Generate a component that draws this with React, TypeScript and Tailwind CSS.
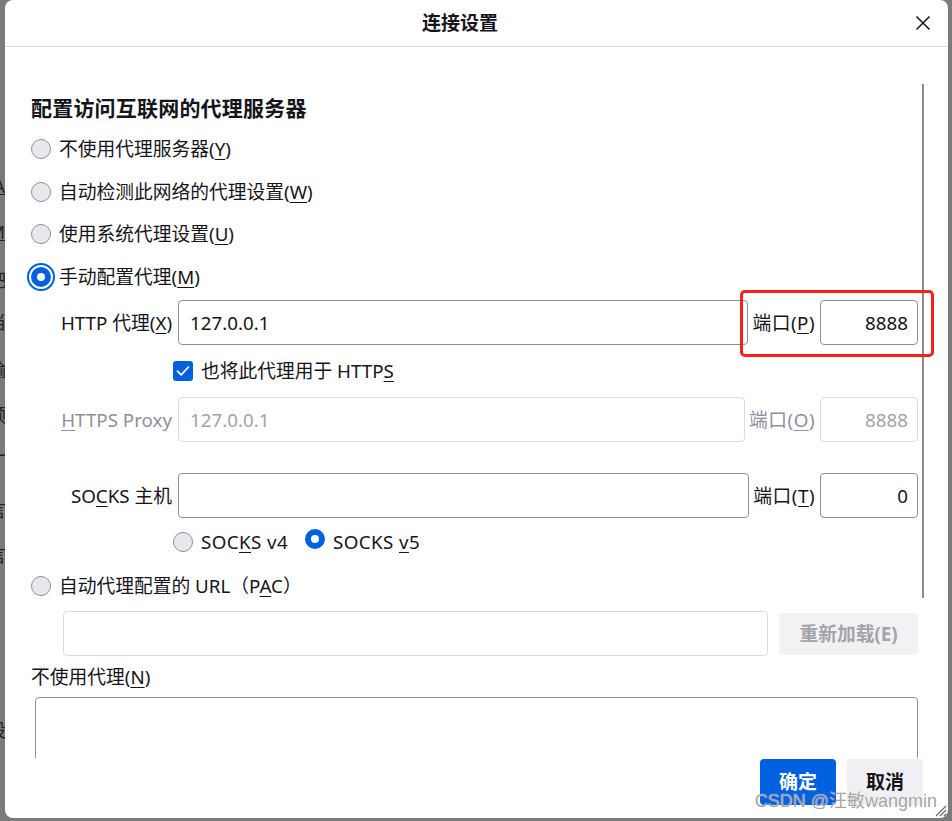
import clsx from 'clsx'

const font = "font-['Noto_Sans','Noto_Sans_CJK_SC',sans-serif]"

function Radio({ checked, focused }: { checked?: boolean; focused?: boolean }) {
  return (
    <span
      className={clsx(
        'box-border inline-block size-[20px] shrink-0 rounded-full',
        checked ? 'border-[6px] border-[#0061e0] bg-white' : 'border border-[#8f8f9d] bg-[#e9e9ed]',
        focused && 'outline-2 outline-offset-2 outline-solid outline-[#0061e0]'
      )}
    />
  )
}

function Checkbox() {
  return (
    <span className="flex size-[20px] shrink-0 items-center justify-center rounded-[3px] bg-[#0061e0]">
      <svg width="14" height="12" viewBox="0 0 14 12" fill="none">
        <path d="M1.5 6.2 5.2 9.8 12.5 2" stroke="#fff" strokeWidth="1.7" strokeLinecap="round" strokeLinejoin="round" />
      </svg>
    </span>
  )
}

function Key({ children }: { children: string }) {
  return <span className="underline decoration-1 underline-offset-[3px]">{children}</span>
}

function RadioRow({ checked, focused, children }: { checked?: boolean; focused?: boolean; children: React.ReactNode }) {
  return (
    <div className="flex h-[42.5px] items-center gap-[8px]">
      <Radio checked={checked} focused={focused} />
      <span>{children}</span>
    </div>
  )
}

type FieldProps = {
  label: React.ReactNode
  value: string
  portLabel: React.ReactNode
  port: string
  disabled?: boolean
  className?: string
}

function Field({ label, value, portLabel, port, disabled, className }: FieldProps) {
  return (
    <div className={clsx('flex h-[45px] items-center', disabled && 'text-[#8f8f9d]', className)}>
      <div className="w-[141px] shrink-0 text-right">{label}</div>
      <div
        className={clsx(
          'ml-[6px] flex h-full flex-1 items-center rounded-[4px] border px-[11px]',
          disabled ? 'border-[#dcdce0] text-[#a3a3a8]' : 'border-[#8f8f9d]'
        )}
      >
        {value}
      </div>
      <div className="ml-[4px] shrink-0 tracking-[0.5px]">{portLabel}</div>
      <div
        className={clsx(
          'ml-[5px] flex h-full w-[98px] shrink-0 items-center justify-end rounded-[4px] border pr-[9px]',
          disabled ? 'border-[#dcdce0] text-[#a3a3a8]' : 'border-[#8f8f9d]'
        )}
      >
        {port}
      </div>
    </div>
  )
}

const behind = [
  { h: 'h-[46px]', t: 'A', u: true },
  { h: 'h-[48px]', t: 'M', u: true },
  { h: 'h-[42px]', t: '吧' },
  { h: 'h-[48px]', t: '当' },
  { h: 'h-[45px]', t: '输' },
  { h: 'h-[47px]', t: '预' },
  { h: 'h-[48px]', t: '厂' },
  { h: 'h-[45px]', t: '言' },
  { h: 'h-[175px]', t: '言' },
  { h: 'h-[40px]', t: '设' },
]

export default function App() {
  return (
    <div className={clsx('flex h-[821px] w-[952px] overflow-hidden bg-[#7b7b7b] text-[18.75px] leading-[26px] text-[#15141a]', font)}>
      {/* page behind the dialog */}
      <div className="w-[5px] shrink-0 overflow-hidden pt-[173px]">
        {behind.map((b, i) => (
          <div key={i} className={clsx('-ml-[12px] w-[17px] text-right text-[18px] leading-[26px] text-[#222]', b.h, b.u && 'underline')}>
            {b.t}
          </div>
        ))}
      </div>

      <div className="relative flex h-[818px] w-[943px] shrink-0 flex-col overflow-hidden rounded-[8px] bg-white">
        <div className="flex h-[47px] shrink-0 items-center border-b border-[#d8d8d8]">
          <div className="flex-1 text-center text-[19px] font-bold">连接设置</div>
          <svg className="mr-[17px]" width="16" height="16" viewBox="0 0 16 16">
            <path d="M1.5 1.5 14.5 14.5M14.5 1.5 1.5 14.5" stroke="#15141a" strokeWidth="1.5" />
          </svg>
        </div>

        <div className="h-[711px] shrink-0 overflow-hidden pl-[26px] pr-[30px] pt-[47px]">
          <div className="h-[28px] text-[21px] font-bold leading-[28px] tracking-[0.2px]">配置访问互联网的代理服务器</div>
          <div className="mt-[6px]">
            <RadioRow>
              不使用代理服务器(<Key>Y</Key>)
            </RadioRow>
            <RadioRow>
              自动检测此网络的代理设置(<Key>W</Key>)
            </RadioRow>
            <RadioRow>
              使用系统代理设置(<Key>U</Key>)
            </RadioRow>
            <RadioRow checked focused>
              手动配置代理(<Key>M</Key>)
            </RadioRow>
          </div>

          <Field
            className="mt-[2px]"
            label={
              <>
                HTTP 代理(<Key>X</Key>)
              </>
            }
            value="127.0.0.1"
            portLabel={
              <>
                端口(<Key>P</Key>)
              </>
            }
            port="8888"
          />
          <div className="flex h-[52px] items-center gap-[8px] pl-[142px]">
            <Checkbox />
            <span>
              也将此代理用于 HTTP<Key>S</Key>
            </span>
          </div>
          <Field
            disabled
            label={
              <>
                <Key>H</Key>TTPS Proxy
              </>
            }
            value="127.0.0.1"
            portLabel={
              <>
                端口(<Key>O</Key>)
              </>
            }
            port="8888"
          />
          <Field
            className="mt-[31px]"
            label={
              <>
                SO<Key>C</Key>KS 主机
              </>
            }
            value=""
            portLabel={
              <>
                端口(<Key>T</Key>)
              </>
            }
            port="0"
          />
          <div className="flex h-[48px] items-center pl-[142px] tracking-[0.4px]">
            <Radio />
            <span className="ml-[8px]">
              SOC<Key>K</Key>S v4
            </span>
            <span className="ml-[17px]">
              <Radio checked />
            </span>
            <span className="ml-[8px]">
              SOCKS <Key>v</Key>5
            </span>
          </div>
          <div className="flex h-[40px] items-center gap-[8px]">
            <Radio />
            <span>
              自动代理配置的 URL（P<Key>A</Key>C）
            </span>
          </div>
          <div className="mt-[5px] flex h-[45px] items-center pl-[32px]">
            <div className="h-full flex-1 rounded-[4px] border border-[#dcdce0]" />
            <div className="ml-[11px] flex h-[42px] w-[139px] items-center justify-center rounded-[4px] bg-[#f2f2f4] font-bold text-[#a3a3a8]">
              重新加载(E)
            </div>
          </div>
          <div className="flex h-[41px] items-center">
            不使用代理(<Key>N</Key>)
          </div>
          <div className="ml-[4px] h-[100px] rounded-t-[4px] border border-[#8f8f9d]" />
        </div>

        <div className="flex flex-1 justify-end gap-[11px] pr-[25px] pt-[1px]">
          <div className="flex h-[46px] w-[76px] items-center justify-center rounded-[4px] bg-[#0061e0] text-[19px] font-bold text-white">
            确定
          </div>
          <div className="flex h-[46px] w-[76px] items-center justify-center rounded-[4px] bg-[#f0f0f4] text-[19px] font-bold">
            取消
          </div>
        </div>

        {/* scrollbar */}
        <div className="absolute left-[917px] top-[84px] h-[514px] w-[2px] bg-[#8a8a8a]" />

        {/* red annotation */}
        <div className="absolute left-[735px] top-[290px] h-[67px] w-[194px] rounded-[5px] border-[3px] border-[#f2231d]" />

        {/* watermark */}
        <div className="absolute bottom-[5px] right-[11px] font-['Liberation_Sans','Noto_Sans_CJK_SC',sans-serif] text-[18px] leading-[24px] text-[#999]/90 [text-shadow:0_0_1px_#fff]">
          CSDN @汪敏wangmin
        </div>

        {/* resize grip */}
        <svg className="absolute bottom-[1px] right-[1px]" width="14" height="14" viewBox="0 0 14 14">
          <path d="M13 3 3 13M13 7 7 13M13 11 11 13" stroke="#6b6b6b" strokeWidth="1.2" />
        </svg>
      </div>
    </div>
  )
}
